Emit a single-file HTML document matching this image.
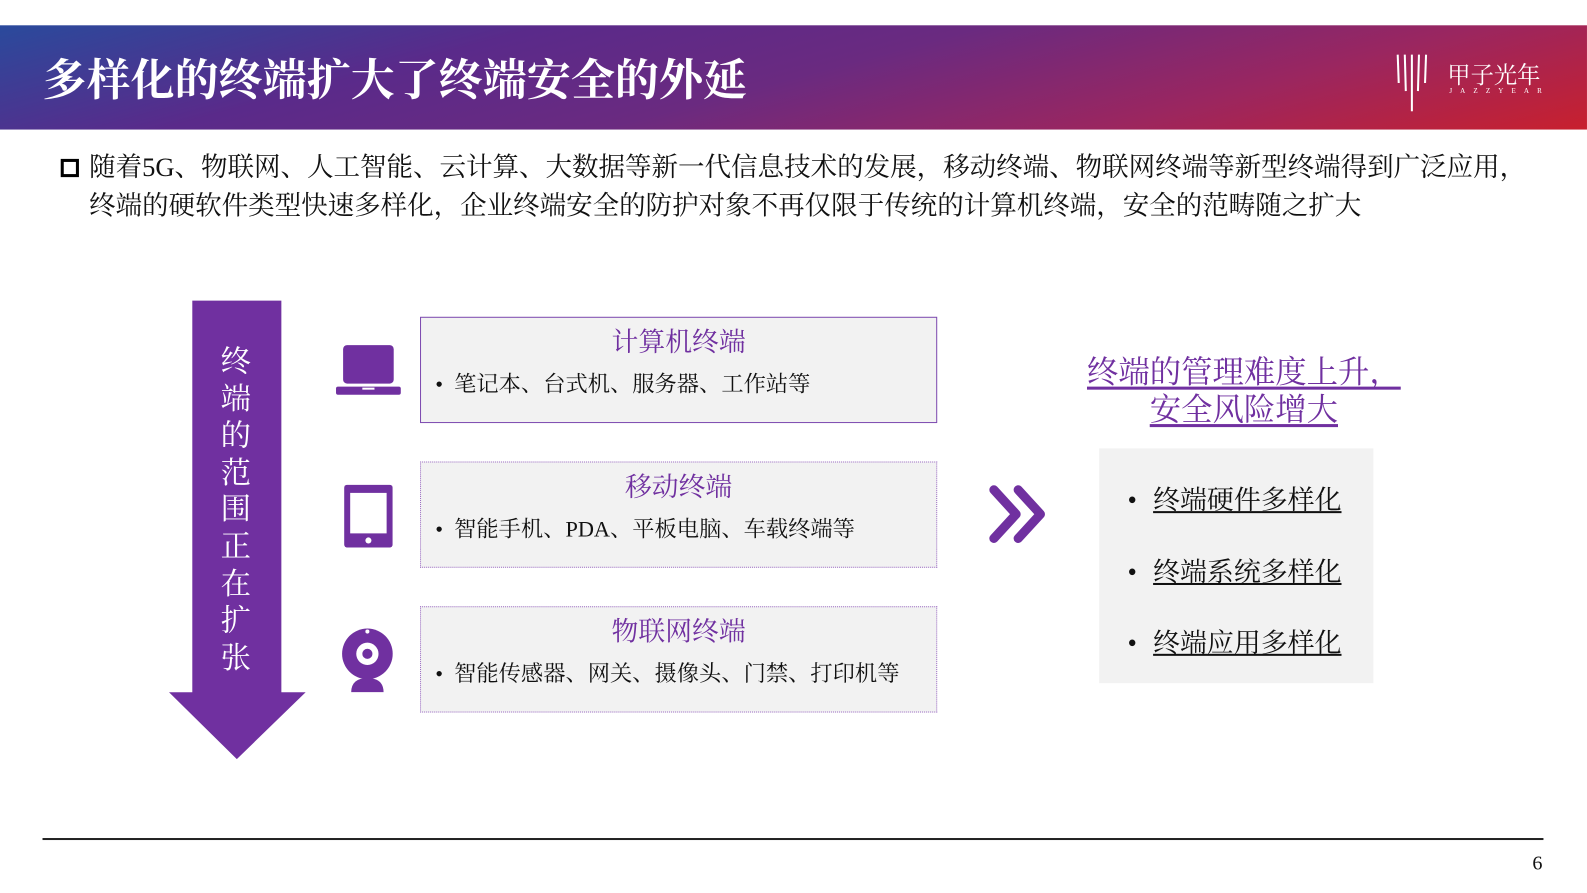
<!DOCTYPE html>
<html><head><meta charset="utf-8"><style>
*{margin:0;padding:0;box-sizing:border-box}
body{width:1587px;height:892px;position:relative;background:#fff;font-family:"Liberation Serif","Noto Serif CJK SC",serif;overflow:hidden;color:#111}
#w{position:absolute;left:0;top:0;width:1568px;height:882px;transform:scale(1.0121);transform-origin:0 0}
.hdr{position:absolute;left:0;top:25px;width:1568px;height:103px;background:linear-gradient(165deg,#2a4a9c 0%,#5a2a8a 28%,#6a2a80 50%,#9a2660 75%,#c8202e 100%)}
.title{position:absolute;left:42px;top:46px;color:#fff;font-size:43.5px;font-weight:bold;font-family:"Noto Serif CJK SC",serif;line-height:60px}
.a{position:absolute;white-space:nowrap}
.box{position:absolute;left:415px;width:511px;height:105px;background:#f2f2f2;border:1.5px solid #7d4ab0}
.box.d{border:1.5px dotted #9c6cc4}
.box h3{font-weight:normal;color:#7030a0;font-size:26.5px;text-align:center;margin-top:2px}
.box p{font-size:22px;margin-left:14px;margin-top:8px}
.ic{position:absolute;fill:#7030a0}
.gray{position:absolute;left:1086px;top:443px;width:271px;height:232px;background:#f2f2f2}
.it{position:absolute;left:1114px;font-size:26.6px;white-space:nowrap}
.it u{margin-left:16px}
</style></head><body><div id="w">
<div class="hdr"></div>
<div class="title">多样化的终端扩大了终端安全的外延</div>
<svg class="a" style="left:1378px;top:52px" width="40" height="58"><g stroke="#fff" stroke-width="2"><line x1="3" y1="2" x2="4" y2="30"/><line x1="10" y1="2" x2="11" y2="38"/><line x1="17" y1="2" x2="17" y2="58"/><line x1="24" y1="2" x2="23" y2="38"/><line x1="31" y1="2" x2="30" y2="30"/></g></svg>
<div class="a" style="left:1430px;top:56px;color:#fff;font-size:23px">甲子光年</div>
<div class="a" style="left:1432px;top:86px;color:#fff;font-size:7px;letter-spacing:8px">JAZZYEAR</div>

<div class="a" style="left:60px;top:157px;width:18px;height:18px;border:3.5px solid #000"></div>
<div class="a" style="left:88px;top:147px;font-size:26.2px;line-height:38px">随着5G、物联网、人工智能、云计算、大数据等新一代信息技术的发展，移动终端、物联网终端等新型终端得到广泛应用，<br>终端的硬软件类型快速多样化，企业终端安全的防护对象不再仅限于传统的计算机终端，安全的范畴随之扩大</div>

<svg class="a" style="left:166px;top:296px" width="138" height="456"><polygon points="24,1 112,1 112,388 136,388 68,454 1,388 24,388" fill="#7030a0"/></svg>
<div class="a" style="left:218px;top:340px;color:#fff;font-size:30px;line-height:36.6px;width:32px;white-space:normal">终端的范围正在扩张</div>

<svg class="ic" style="left:331px;top:340px" width="66" height="52"><rect x="8" y="1" width="50" height="38" rx="4"/><rect x="1" y="42" width="64" height="8" rx="2"/><rect x="27" y="43" width="12" height="2" fill="#fff"/></svg>
<svg class="ic" style="left:340px;top:479px" width="48" height="62"><rect x="0" y="0" width="48" height="62" rx="3"/><rect x="6" y="8" width="36" height="40" fill="#fff"/><circle cx="24" cy="55" r="3" fill="#fff"/></svg>
<svg class="ic" style="left:337px;top:620px" width="54" height="64"><circle cx="26" cy="26" r="25"/><circle cx="26" cy="26" r="11" fill="#fff"/><circle cx="26" cy="26" r="5"/><circle cx="26" cy="4" r="2" fill="#fff"/><path d="M10,64 Q10,50 26,50 Q42,50 42,64Z"/></svg>

<div class="box" style="top:313px"><h3>计算机终端</h3><p>•&nbsp; 笔记本、台式机、服务器、工作站等</p></div>
<div class="box d" style="top:456px"><h3>移动终端</h3><p>•&nbsp; 智能手机、PDA、平板电脑、车载终端等</p></div>
<div class="box d" style="top:599px"><h3>物联网终端</h3><p>•&nbsp; 智能传感器、网关、摄像头、门禁、打印机等</p></div>

<svg class="a" style="left:976px;top:478px" width="64" height="64"><g fill="none" stroke="#7030a0" stroke-width="9" stroke-linecap="round" stroke-linejoin="round"><polyline points="6,6 28,30 6,54"/><polyline points="30,6 52,30 30,54"/></g></svg>

<div class="a" style="left:1066px;top:349px;width:326px;text-align:center;color:#7030a0;font-size:31px;line-height:37px;text-decoration:underline;text-underline-offset:4px">终端的管理难度上升，<br>安全风险增大</div>

<div class="gray"></div>
<div class="it" style="top:472px">•<u>终端硬件多样化</u></div>
<div class="it" style="top:543px">•<u>终端系统多样化</u></div>
<div class="it" style="top:613px">•<u>终端应用多样化</u></div>

<div class="a" style="left:42px;top:828px;width:1483px;height:1.5px;background:#222"></div>
<div class="a" style="left:1514px;top:842px;font-size:20px">6</div>
</div></body></html>
